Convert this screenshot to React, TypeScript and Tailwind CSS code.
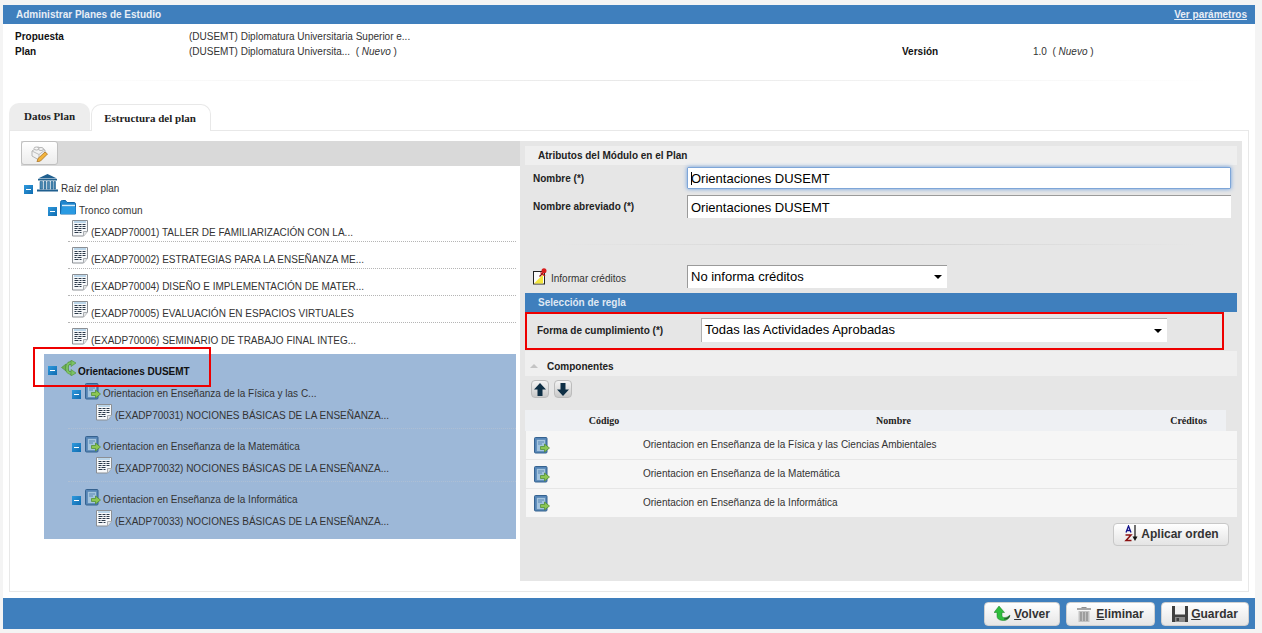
import React from 'react';

const Toggle = () => (
    <span className="flex h-[9px] w-[9px] shrink-0 items-center justify-center bg-gradient-to-br from-[#2f9ade] to-[#0f6cb0]">
        <span className="h-px w-[5px] bg-white" />
    </span>
);

const DocIcon = () => (
    <svg width="16" height="17" viewBox="0 0 16 17" className="shrink-0">
        <path d="M.5.5h15v11l-4 4.500H.5z" fill="#f7f9fb" stroke="#8b8f94" />
        <path d="M11.500 16v-4.500h4" fill="#e4e6e8" stroke="#a9adb1" />
        <path d="M2 2h12" stroke="#7fb2d8" />
        <path d="M2.500 4.500h3M6.500 4.500h3M10.500 4.500h3M2.500 6.500h4M7.500 6.500h2M10.500 6.500h3M2.500 8.500h3M6.500 8.500h3M10.500 8.500h3M2.500 10.500h2M5.500 10.500h4M2.500 12.500h4M7.500 12.500h2" stroke="#2c3a4a" />
    </svg>
);

const BookIcon = () => (
    <svg width="16" height="17" viewBox="0 0 16 17" className="shrink-0">
        <rect x=".5" y=".5" width="12.500" height="15.500" rx="1" fill="#5585b8" stroke="#35628f" />
        <rect x="2.500" y="2.500" width="9" height="12" fill="#a4c4de" stroke="#5a88b4" strokeWidth=".7" />
        <path d="M4 5h6M4 7h4" stroke="#5a88b4" />
        <path d="M6.500 9.500h4V7l5 4-5 4v-2.500h-4z" fill="#8cc653" stroke="#4a8a2a" strokeWidth=".7" />
    </svg>
);

const BranchIcon = () => (
    <svg width="15" height="16" viewBox="0 0 15 16" className="shrink-0">
        <path d="M.5 7.500L5 4v7z" fill="#6fb257" stroke="#4f8f3c" strokeWidth=".6" />
        <path d="M3 7.500h4" stroke="#6fb257" strokeWidth="2.500" />
        <path d="M11 3H9.500C7.500 3 6 5 6 8s1.500 5 3.500 5H11" fill="none" stroke="#4f8f3c" strokeWidth="3.400" />
        <path d="M11 3H9.500C7.500 3 6 5 6 8s1.500 5 3.500 5H11" fill="none" stroke="#7cc264" strokeWidth="2" />
        <path d="M10 0l5 3-5 3.500zM10 9.500l5 3.500-5 3z" fill="#7cc264" stroke="#4f8f3c" strokeWidth=".6" />
    </svg>
);

const BankIcon = () => (
    <svg width="21" height="18" viewBox="0 0 21 18" className="shrink-0">
        <path d="M10.500 0L20 4.500H1z" fill="#1f5f8f" />
        <rect x="1" y="5" width="19" height="1.500" fill="#23628f" />
        <path d="M3 7.500h2.500V15H3zM7 7.500h2V15H7zM10.500 7.500h2V15h-2zM14 7.500h2V15h-2zM17 7.500h1.500V15H17z" fill="#4b89b3" stroke="#1f5f8f" strokeWidth=".6" />
        <rect x="0" y="15.500" width="21" height="2" fill="#1f5f8f" />
    </svg>
);

const FolderIcon = () => (
    <svg width="16" height="15" viewBox="0 0 16 15" className="shrink-0">
        <path d="M.5 14V2.500C.5 1 1.500.5 2.500.5h3l1.500 2h7c1 0 1.500.5 1.500 1.500V14z" fill="#1f86cf" stroke="#1568a8" />
        <path d="M2 5.500h13" stroke="#d8eefb" strokeWidth="1.500" />
        <path d="M.5 14L2.500 7h13L15.500 14z" fill="#2a9ae2" />
    </svg>
);

const LegoPencil = () => (
    <svg width="17" height="17" viewBox="0 0 17 17">
        <path d="M1 6l6-4 7 3v6l-6 4-7-4z" fill="#f2f2f2" stroke="#b5b5b5" />
        <path d="M1 6l7 3.500V15M8 9.500L14 5" fill="none" stroke="#bdbdbd" />
        <ellipse cx="5.500" cy="3.500" rx="2.500" ry="1.500" fill="#f7f7f7" stroke="#b5b5b5" />
        <ellipse cx="10" cy="4" rx="2.500" ry="1.500" fill="#f7f7f7" stroke="#b5b5b5" />
        <path d="M14 7l2.500 2-7 7-3.500 1 1-3.500z" fill="#f3b43c" stroke="#a8742a" strokeWidth=".8" />
    </svg>
);

const NoteIcon = () => (
    <svg width="14" height="17" viewBox="0 0 14 17" className="shrink-0">
        <rect x=".5" y="3.500" width="11" height="12.500" fill="#fafafa" stroke="#222" />
        <path d="M1 15.500l9-9v9z" fill="#f4e63c" />
        <path d="M6.500 8.500L11 4" stroke="#8a1010" strokeWidth="1.200" />
        <circle cx="11" cy="2.800" r="2.500" fill="#d81e1e" />
        <path d="M7.500 4.500l4.500 3.500" stroke="#c01818" strokeWidth="1.500" />
    </svg>
);

const ArrowButton = ({ up }: { up?: boolean }) => (
    <button className="flex h-[18px] w-[18px] items-center justify-center rounded-[4px] border border-[#bcbcbc] bg-gradient-to-b from-[#f4f4f4] to-[#c9c9c9]">
        <svg width="12" height="13" viewBox="0 0 12 13" className={up ? '' : 'rotate-180'}>
            <path d="M6 0l6 6.500H8.500V13h-5V6.500H0z" fill="#0e2f45" />
        </svg>
    </button>
);

const SortIcon = () => (
    <svg width="16" height="17" viewBox="0 0 16 17" className="shrink-0">
        <path d="M3 7.500L5.500 1 8 7.500M3.800 5.500h3.400" fill="none" stroke="#10108a" strokeWidth="1.300" />
        <path d="M2.500 10h5.500l-5 5.500h5.500" fill="none" stroke="#8a1010" strokeWidth="1.500" />
        <path d="M12 0v12" stroke="#111" strokeWidth="1.200" />
        <path d="M9.500 11.500h5L12 16z" fill="#111" />
    </svg>
);

const BackIcon = () => (
    <svg width="17" height="15" viewBox="0 0 17 15" className="shrink-0">
        <path d="M5 0l5.500 6.500H8v3c0 1.500 1 2 2.500 2 2 0 3.500-.5 5.500-2.500-.5 3.500-3 5.500-6.500 5.500C6.500 14.500 3 13.500 3 10V6.500H0z" fill="#2fbe3c" stroke="#1a7a26" strokeWidth=".5" />
        <path d="M10 13c2.500 0 4.500-1 5.500-3" stroke="#2d4a2d" strokeWidth="1.200" fill="none" />
    </svg>
);

const TrashIcon = () => (
    <svg width="14" height="16" viewBox="0 0 14 16" className="shrink-0">
        <path d="M4.500 1h5v1h-5z" fill="#8f8f8f" />
        <rect x="0" y="2" width="14" height="2" fill="#a6a6a6" />
        <path d="M1.500 5h11v11h-11z" fill="#c2c2c2" />
        <path d="M4 6v9M7 6v9M10 6v9" stroke="#8a8a8a" strokeWidth="1.300" />
    </svg>
);

const FloppyIcon = () => (
    <svg width="16" height="16" viewBox="0 0 16 16" className="shrink-0">
        <path d="M0 0h16v16H0z" fill="#3f3f3f" />
        <rect x="3" y="0" width="10" height="8.500" fill="#f1f1f1" />
        <rect x="3" y="11" width="10" height="5" fill="#8a8a8a" />
        <rect x="4.500" y="12" width="2.500" height="3" fill="#3f3f3f" />
    </svg>
);

const Caret = () => (
    <span className="h-0 w-0 border-x-[4px] border-t-[4px] border-x-transparent border-t-black" />
);

const TreeItem = ({ label, line }: { label: string; line?: boolean }) => (
    <div className={`h-[27px] pt-[5px] ${line ? 'border-b border-dotted border-[#b5b5b5]' : ''}`}>
        <div className="ml-[4px] flex items-end gap-[3px]">
            <DocIcon />
            <span className="translate-y-[2px] leading-[12px] text-[#333]">{label}</span>
        </div>
    </div>
);

const SubModule = ({ label, item, line }: { label: string; item: string; line?: boolean }) => (
    <div className={`ml-[20px] h-[53px] ${line ? 'border-b border-dotted border-[#aebfd4]' : ''}`}>
        <div className="flex h-[24px] items-end">
            <div className="ml-[4px] mb-[1px]"><Toggle /></div>
            <div className="ml-[4px]"><BookIcon /></div>
            <span className="ml-[2px] leading-[12px] text-[#333]">{label}</span>
        </div>
        <div className="ml-[28px] mt-[4px] flex items-end gap-[3px]">
            <DocIcon />
            <span className="translate-y-[1px] leading-[12px] text-[#333]">{item}</span>
        </div>
    </div>
);

const rows = [
    'Orientacion en Enseñanza de la Física y las Ciencias Ambientales',
    'Orientacion en Enseñanza de la Matemática',
    'Orientacion en Enseñanza de la Informática',
];

const textInput = 'h-full w-full bg-white pl-[3px] text-[13px] text-black outline-none';

export default function App() {
    return (
        <div className="relative h-[633px] w-[1262px] overflow-hidden bg-[#f4f4f4] pl-[3px] pr-[7px] pt-[5px] text-[10px] font-['Liberation_Sans',Arial,sans-serif]">
            <div className="flex h-[19px] items-center justify-between bg-[#3f7fbd] pl-[13px] pr-[8px] font-bold text-[#e8eef6]">
                <span>Administrar Planes de Estudio</span>
                <a className="underline">Ver parámetros</a>
            </div>

            <div className="h-[574px] bg-white">
                <div className="pl-[12px] pt-[5px] leading-[15px] text-[#333]">
                    <div className="flex">
                        <span className="w-[174px] font-bold text-[#111]">Propuesta</span>
                        <span>(DUSEMT) Diplomatura Universitaria Superior e...</span>
                    </div>
                    <div className="flex">
                        <span className="w-[174px] font-bold text-[#111]">Plan</span>
                        <span className="w-[713px]">(DUSEMT) Diplomatura Universita...&nbsp; ( <i>Nuevo</i> )</span>
                        <span className="w-[131px] font-bold text-[#111]">Versión</span>
                        <span>1.0&nbsp; ( <i>Nuevo</i> )</span>
                    </div>
                </div>
                <div className="mx-[30px] mt-[21px] h-px bg-gradient-to-r from-white via-[#e8e8e8] to-white" />

                <div className="ml-[6px] mt-[22px] flex h-[27px] items-end font-['Liberation_Serif',serif] text-[11px] font-bold text-[#222]">
                    <div className="flex h-[27px] w-[81px] items-center justify-center rounded-t-[10px] bg-[#ededed]">Datos Plan</div>
                    <div className="relative z-10 -mb-px ml-px flex h-[27px] w-[120px] items-center justify-center rounded-t-[10px] border border-b-0 border-[#e8e8e8] bg-white pr-[2px] pt-[1px]">Estructura del plan</div>
                </div>

                <div className="mx-[6px] flex h-[462px] border border-[#e8e8e8] bg-white pl-[11px] pr-[7px] pt-[10px]">
                    <div className="w-[499px] shrink-0">
                        <div className="h-[25px] bg-[#d9d9d9]">
                            <button className="flex h-[24px] w-[37px] items-center justify-center rounded-[3px] border border-[#c0c0c0] bg-gradient-to-b from-white to-[#ececec]">
                                <LegoPencil />
                            </button>
                        </div>

                        <div className="ml-[3px] flex h-[29px] items-end">
                            <div className="mb-[1px]"><Toggle /></div>
                            <div className="ml-[4px] mb-[3px]"><BankIcon /></div>
                            <span className="ml-[3px] leading-[12px] text-[#333]">Raíz del plan</span>
                        </div>
                        <div className="ml-[27px] mt-[6px] flex h-[16px] items-end">
                            <div className="mb-[1px]"><Toggle /></div>
                            <div className="ml-[3px] mb-[2px]"><FolderIcon /></div>
                            <span className="ml-[3px] leading-[12px] text-[#333]">Tronco comun</span>
                        </div>
                        <div className="ml-[47px] mr-[4px] -mt-[2px]">
                            <TreeItem line label="(EXADP70001) TALLER DE FAMILIARIZACIÓN CON LA..." />
                            <TreeItem line label="(EXADP70002) ESTRATEGIAS PARA LA ENSEÑANZA ME..." />
                            <TreeItem line label="(EXADP70004) DISEÑO E IMPLEMENTACIÓN DE MATER..." />
                            <TreeItem line label="(EXADP70005) EVALUACIÓN EN ESPACIOS VIRTUALES" />
                            <TreeItem label="(EXADP70006) SEMINARIO DE TRABAJO FINAL INTEG..." />
                        </div>

                        <div className="ml-[23px] mr-[4px] mt-[4px] h-[185px] bg-[#9db8d8] pl-[4px]">
                            <div className="flex h-[22px] items-end">
                                <div className="mb-[1px]"><Toggle /></div>
                                <div className="ml-[4px]"><BranchIcon /></div>
                                <span className="ml-[2px] translate-y-[2px] font-bold leading-[12px] text-[#111]">Orientaciones DUSEMT</span>
                            </div>
                            <SubModule line label="Orientacion en Enseñanza de la Física y las C..." item="(EXADP70031) NOCIONES BÁSICAS DE LA ENSEÑANZA..." />
                            <SubModule line label="Orientacion en Enseñanza de la Matemática" item="(EXADP70032) NOCIONES BÁSICAS DE LA ENSEÑANZA..." />
                            <SubModule label="Orientacion en Enseñanza de la Informática" item="(EXADP70033) NOCIONES BÁSICAS DE LA ENSEÑANZA..." />
                        </div>
                    </div>

                    <div className="h-[440px] w-[722px] shrink-0 bg-[#e6e6e6] pl-[5px] pr-[5px] pt-[5px] text-[#222]">
                        <div className="flex h-[19px] items-center bg-[#efefef] pl-[13px] font-bold text-[#222]">Atributos del Módulo en el Plan</div>

                        <div className="mt-[2px] flex h-[22px] items-center">
                            <label className="ml-[8px] w-[154px] font-bold">Nombre (*)</label>
                            <div className="relative h-[22px] w-[544px] rounded-[1px] border border-[#7ea6d8] shadow-[0_0_4px_#6b9fe0]">
                                <input readOnly value="Orientaciones DUSEMT" className={textInput} />
                                <span className="absolute left-[3px] top-[4px] h-[13px] w-px bg-black" />
                            </div>
                        </div>
                        <div className="mt-[6px] flex h-[23px] items-center">
                            <label className="ml-[8px] w-[154px] pb-[1px] font-bold">Nombre abreviado (*)</label>
                            <div className="h-[23px] w-[544px] border-l border-t border-[#9a9a9a]">
                                <input readOnly value="Orientaciones DUSEMT" className={textInput} />
                            </div>
                        </div>
                        <div className="ml-[30px] mt-[26px] h-px w-[640px] bg-gradient-to-r from-[#e6e6e6] via-[#d2d2d2] to-[#e6e6e6]" />

                        <div className="mt-[20px] flex h-[23px] items-center">
                            <div className="ml-[8px] flex w-[154px] items-end gap-[4px]">
                                <NoteIcon />
                                <span className="translate-y-[1px] text-[#333]">Informar créditos</span>
                            </div>
                            <div className="flex h-[23px] w-[260px] items-center justify-between border-l border-t border-[#9a9a9a] bg-white pl-[3px] pr-[5px] text-[13px] text-black">
                                <span>No informa créditos</span>
                                <Caret />
                            </div>
                        </div>

                        <div className="mt-[5px] flex h-[19px] items-center bg-[#3f7fbd] pl-[13px] font-bold text-[#dfe8f3]">Selección de regla</div>

                        <div className="mt-[6px] flex h-[24px] items-center">
                            <label className="ml-[12px] w-[164px] font-bold">Forma de cumplimiento (*)</label>
                            <div className="flex h-[24px] w-[466px] items-center justify-between border-l border-t border-[#b0b0b0] bg-white pl-[3px] pr-[5px] text-[13px] text-black">
                                <span className="pb-[2px]">Todas las Actividades Aprobadas</span>
                                <Caret />
                            </div>
                        </div>

                        <div className="mt-[9px] flex h-[25px] items-center bg-[#efefef] pl-[5px] pt-[5px]">
                            <span className="h-0 w-0 border-x-[4px] border-b-[4px] border-x-transparent border-b-[#c4c4c4]" />
                            <span className="ml-[9px] font-bold text-[#222]">Componentes</span>
                        </div>

                        <div className="ml-[6px] mt-[4px] flex gap-[5px]">
                            <ArrowButton up />
                            <ArrowButton />
                        </div>

                        <div className="mt-[12px] flex h-[21px] w-[701px] items-center bg-[#eef0f3] font-['Liberation_Serif',serif] font-bold text-[#222]">
                            <span className="w-[111px] text-center pl-[47px]">Código</span>
                            <span className="w-[515px] text-center">Nombre</span>
                            <span className="w-[75px] text-center">Créditos</span>
                        </div>
                        <div className="ml-px">
                            {rows.map((row) => (
                                <div key={row} className="flex h-[29px] items-center border-b border-[#e6e6e6] bg-[#f6f6f6]">
                                    <div className="w-[117px] pl-[8px]"><BookIcon /></div>
                                    <span className="pb-[2px] text-[#333]">{row}</span>
                                </div>
                            ))}
                        </div>

                        <div className="mt-[5px] flex justify-end pr-[8px]">
                            <button className="flex h-[23px] w-[116px] items-center justify-center gap-[2px] rounded-[4px] border border-[#c8c8c8] bg-gradient-to-b from-white to-[#e4e4e4] pb-[2px] text-[12px] font-bold text-[#333]">
                                <SortIcon />
                                Aplicar orden
                            </button>
                        </div>
                    </div>
                </div>
            </div>

            <div className="flex h-[31px] items-center justify-end gap-[6px] bg-[#3f7fbd] pr-[6px] text-[12px] font-bold text-[#333]">
                <button className="flex h-[24px] w-[76px] items-center justify-center gap-[3px] rounded-[4px] border border-[#d0d0d0] bg-gradient-to-b from-white to-[#e6e6e6]">
                    <BackIcon /><span><u>V</u>olver</span>
                </button>
                <button className="flex h-[24px] w-[89px] items-center justify-center gap-[5px] rounded-[4px] border border-[#d0d0d0] bg-gradient-to-b from-white to-[#e6e6e6]">
                    <TrashIcon /><span><u>E</u>liminar</span>
                </button>
                <button className="flex h-[24px] w-[88px] items-center justify-center gap-[3px] rounded-[4px] border border-[#d0d0d0] bg-gradient-to-b from-white to-[#e6e6e6]">
                    <FloppyIcon /><span><u>G</u>uardar</span>
                </button>
            </div>

            <div className="absolute left-[33px] top-[347px] h-[40px] w-[178px] border-2 border-[#ee0000]" />
            <div className="absolute left-[525px] top-[312px] h-[38px] w-[699px] border-2 border-[#ee0000]" />
        </div>
    );
}
